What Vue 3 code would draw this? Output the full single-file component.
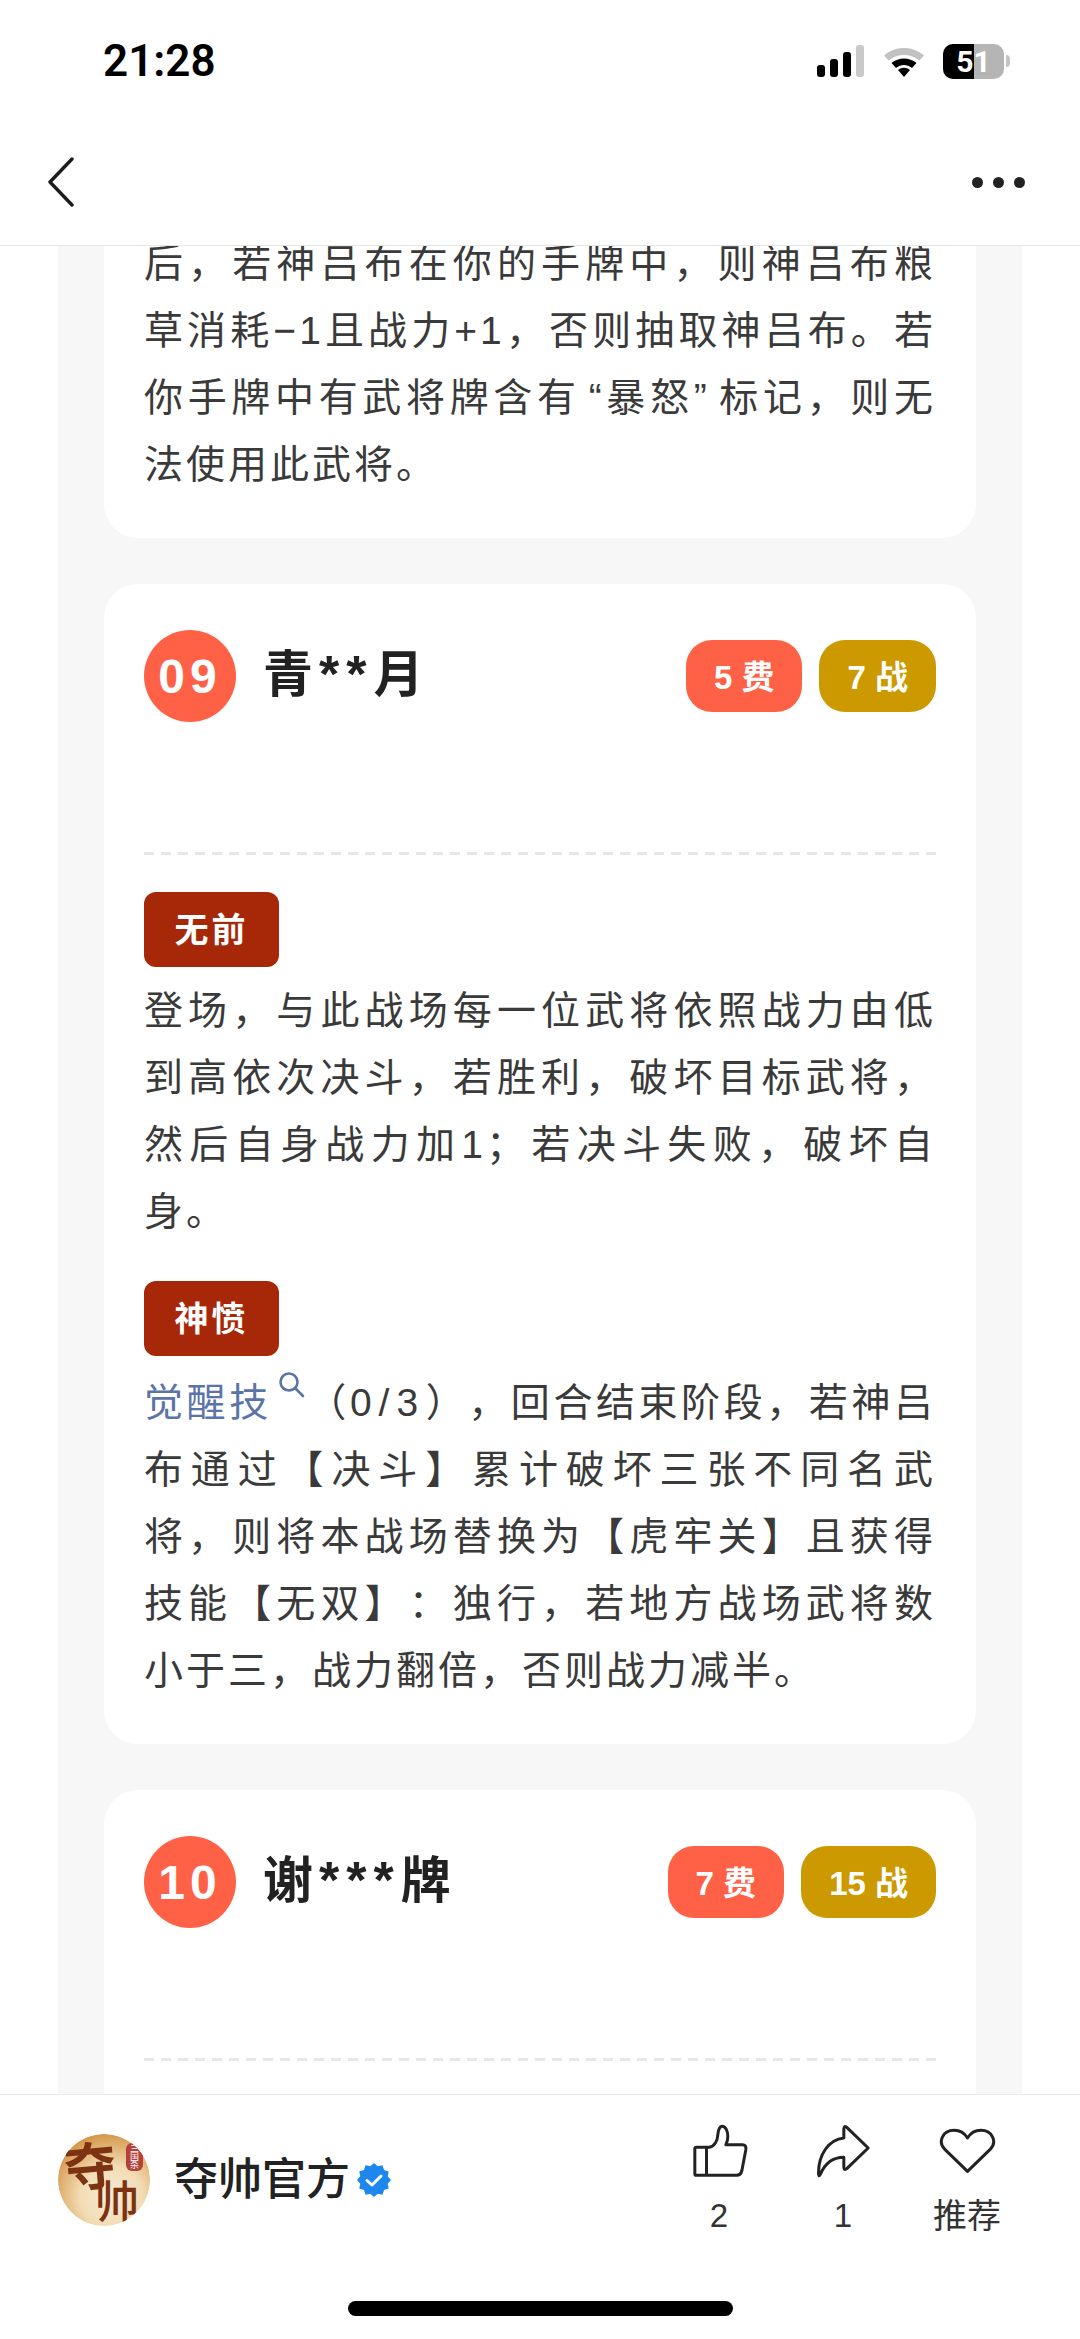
<script setup>
const points = (() => {
  const out = []
  for (let i = 0; i < 24; i++) {
    const r = i % 2 ? 14.2 : 17
    const a = (Math.PI * 2 * i) / 24 - Math.PI / 2
    out.push(`${(17 + r * Math.cos(a)).toFixed(2)},${(17 + r * Math.sin(a)).toFixed(2)}`)
  }
  return out.join(' ')
})()
</script>

<template>
  <div class="page">
    <header class="head">
      <div class="status">
        <span class="time">21:28</span>
        <div class="sys">
          <svg class="signal" width="50" height="32" viewBox="0 0 50 32">
            <rect x="0" y="20" width="8" height="12" rx="3" fill="#000" />
            <rect x="13" y="14" width="8" height="18" rx="3" fill="#000" />
            <rect x="26" y="7" width="8" height="25" rx="3" fill="#000" />
            <rect x="39" y="0" width="8" height="32" rx="3" fill="#c9c9c9" />
          </svg>
          <svg class="wifi" width="44" height="32" viewBox="0 0 44 32">
            <path d="M2 10.5C13 0.5 31 0.5 42 10.5L37.5 15.5C29 8 15 8 6.5 15.5Z" fill="#c2c2c2" />
            <path d="M9.5 18C16.5 12 27.5 12 34.5 18L30 23C25 19 19 19 14 23Z" fill="#000" />
            <path d="M16 25C19.5 22 24.5 22 28 25L22 32Z" fill="#000" />
          </svg>
          <div class="battery">
            <span class="level"></span>
            <span class="pct">51</span>
          </div>
          <span class="nub"></span>
        </div>
      </div>
      <nav class="nav">
        <svg width="28" height="50" viewBox="0 0 28 50">
          <path d="M25 2L3 25L25 48" fill="none" stroke="#1c1c1c" stroke-width="3.4" stroke-linecap="round" stroke-linejoin="round" />
        </svg>
        <div class="dots"><i></i><i></i><i></i></div>
      </nav>
    </header>

    <main class="content">
      <div class="column">
        <section class="card first">
          <p class="body">后，若神吕布在你的手牌中，则神吕布粮草消耗−1且战力+1，否则抽取神吕布。若你手牌中有武将牌含有<span class="ql">“</span>暴怒<span class="qr">”</span>标记，则无法使用此武将。</p>
        </section>

        <section class="card">
          <div class="row">
            <span class="no">09</span>
            <span class="name">青<em>**</em>月</span>
            <div class="badges">
              <span class="badge cost">5 费</span>
              <span class="badge power">7 战</span>
            </div>
          </div>
          <div class="dash"></div>
          <span class="tag">无前</span>
          <p class="body">登场，与此战场每一位武将依照战力由低到高依次决斗，若胜利，破坏目标武将，然后自身战力加1；若决斗失败，破坏自身。</p>
          <span class="tag second">神愤</span>
          <p class="body later"><span class="link">觉醒技<svg class="mag" width="27" height="27" viewBox="0 0 27 27"><circle cx="11" cy="11" r="8.5" fill="none" stroke="#5b74a8" stroke-width="2.6" /><path d="M17 17L25 25" stroke="#5b74a8" stroke-width="2.6" stroke-linecap="round" /></svg></span>（<span class="frac">0/3</span>），回合结束阶段，若神吕布通过【决斗】累计破坏三张不同名武将，则将本战场替换为【虎牢关】且获得技能【无双】：独行，若地方战场武将数小于三，战力翻倍，否则战力减半。</p>
        </section>

        <section class="card last">
          <div class="row">
            <span class="no">10</span>
            <span class="name">谢<em>***</em>牌</span>
            <div class="badges">
              <span class="badge cost">7 费</span>
              <span class="badge power">15 战</span>
            </div>
          </div>
          <div class="dash"></div>
        </section>
      </div>
    </main>

    <footer class="foot">
      <div class="bar">
        <div class="author">
          <div class="avatar">
            <svg width="92" height="92" viewBox="0 0 92 92">
              <defs>
                <radialGradient id="av" cx="58%" cy="68%" r="68%">
                  <stop offset="0" stop-color="#f8ecd8" />
                  <stop offset="0.5" stop-color="#f2dcb4" />
                  <stop offset="1" stop-color="#d6984c" />
                </radialGradient>
              </defs>
              <circle cx="46" cy="46" r="46" fill="url(#av)" />
              <text x="6" y="52" class="av1" transform="rotate(-5 30 30)">夺</text>
              <text x="37" y="84" class="av2">帅</text>
              <rect x="68" y="9" width="17" height="28" rx="6" fill="#b5423a" />
              <text x="72" y="18" class="av3">三</text>
              <text x="72" y="26" class="av3">国</text>
              <text x="72" y="34" class="av3">杀</text>
            </svg>
          </div>
          <span class="author-name">夺帅官方</span>
          <svg class="check" width="34" height="34" viewBox="0 0 34 34">
            <polygon :points="points" fill="#1e87ee" />
            <path d="M10 17.5L15 22L24 13" fill="none" stroke="#fff" stroke-width="3" stroke-linecap="round" stroke-linejoin="round" />
          </svg>
        </div>
        <div class="actions">
          <div class="action">
            <svg width="57" height="54" viewBox="96 38 170 162">
              <path class="ico" d="M107 113Q107 108 112 108L150 108C165 105 175 90 176 70C177 50 185 44 190 45C200 46 206 60 206 75C206 85 203 95 200 100L250 100Q262 100 260 115L248 178Q245 192 232 192L112 192Q107 192 107 187ZM142 108L142 192" />
            </svg>
            <span>2</span>
          </div>
          <div class="action">
            <svg width="57" height="54" viewBox="465 48 170 162">
              <path class="ico" d="M560 58L624 120L560 182Q552 188 551 178L551 148C520 148 495 165 480 200Q475 208 475 195C475 140 505 95 551 90L551 62Q552 52 560 58Z" />
            </svg>
            <span>1</span>
          </div>
          <div class="action">
            <svg width="57" height="54" viewBox="835 46 170 162">
              <path class="ico" d="M920 188L852 122C830 100 845 65 880 65C898 65 912 75 920 88C928 75 942 65 960 65C995 65 1010 100 988 122Z" />
            </svg>
            <span class="rec">推荐</span>
          </div>
        </div>
      </div>
      <div class="home"></div>
    </footer>
  </div>
</template>

<style>
html, body { margin: 0; background: #fff; }
</style>

<style scoped>
.page {
  width: 1080px;
  height: 2339px;
  display: flex;
  flex-direction: column;
  overflow: hidden;
  background: #fff;
  font-family: "Liberation Sans", "Noto Sans CJK SC", sans-serif;
  color: #333;
}
.head {
  height: 246px;
  flex: none;
  box-sizing: border-box;
  border-bottom: 1px solid #e6e6e6;
}
.status {
  height: 122px;
  display: flex;
  align-items: center;
  justify-content: space-between;
  padding: 0 70px 0 103px;
}
.time {
  font-family: Roboto, sans-serif;
  font-size: 44px;
  font-weight: 600;
  color: #000;
}
.sys {
  display: flex;
  align-items: center;
}
.signal { margin-right: 14px; }
.wifi { margin-right: 16px; width: 46px; }
.battery {
  position: relative;
  width: 61px;
  height: 35px;
  border-radius: 10px;
  background: #b5b5b5;
  overflow: hidden;
  display: flex;
  align-items: center;
  justify-content: center;
}
.level {
  position: absolute;
  left: 0;
  top: 0;
  bottom: 0;
  width: 31px;
  background: #000;
}
.pct {
  position: relative;
  font-family: Roboto, sans-serif;
  color: #fff;
  font-size: 30px;
  font-weight: 700;
}
.nub {
  width: 4px;
  height: 12px;
  margin-left: 2px;
  border-radius: 0 4px 4px 0;
  background: #c4c4c4;
}
.nav {
  height: 120px;
  display: flex;
  align-items: center;
  justify-content: space-between;
  padding: 0 55px 0 47px;
}
.dots {
  display: flex;
  gap: 10px;
}
.dots i {
  width: 11px;
  height: 11px;
  border-radius: 50%;
  background: #222;
}
.content {
  flex: 1;
  min-height: 0;
  overflow: hidden;
}
.column {
  margin: -16px 58px 0;
  padding: 0 46px;
  background: #f7f7f7;
  display: flex;
  flex-direction: column;
  gap: 46px;
}
.card {
  background: #fff;
  border-radius: 34px;
  padding: 46px 40px 40px;
  flex: none;
}
.card.first {
  padding-top: 0;
  border-radius: 0 0 34px 34px;
}
.card.last { padding-bottom: 240px; }
.row {
  height: 92px;
  display: flex;
  align-items: center;
}
.no {
  width: 92px;
  height: 92px;
  border-radius: 50%;
  background: #ff6146;
  color: #fff;
  font-size: 48px;
  font-weight: 700;
  letter-spacing: 5px;
  display: flex;
  align-items: center;
  justify-content: center;
}
.name {
  margin: 0 0 13px 27px;
  font-size: 50px;
  font-weight: 700;
  color: #222;
}
.name em {
  font-style: normal;
  font-size: 52px;
  letter-spacing: 7px;
  margin-left: 6px;
}
.badges {
  margin-left: auto;
  display: flex;
  gap: 17px;
}
.badge {
  height: 72px;
  min-width: 115px;
  box-sizing: border-box;
  padding: 0 28px 3px;
  border-radius: 26px;
  color: #fff;
  font-size: 33px;
  font-weight: 700;
  display: flex;
  align-items: center;
  justify-content: center;
}
.cost { background: #ff6146; }
.power { background: #cc9900; }
.dash {
  height: 3px;
  margin-top: 130px;
  background: repeating-linear-gradient(90deg, #e8e6e6 0 10px, transparent 10px 17px);
}
.tag {
  display: flex;
  align-items: center;
  justify-content: center;
  box-sizing: border-box;
  width: 135px;
  height: 75px;
  padding-bottom: 4px;
  margin-top: 37px;
  border-radius: 12px;
  background: #a62808;
  color: #fff;
  font-size: 34px;
  font-weight: 700;
  letter-spacing: 3px;
}
.tag.second { margin-top: 36px; }
.body {
  margin: 10px 0 0;
  font-size: 39px;
  line-height: 67px;
  letter-spacing: 3px;
  text-align: justify;
  text-spacing-trim: space-all;
  color: #3a3a3a;
}
.body.later { margin-top: 13px; }
.first .body { margin: 0; }
.ql { margin-left: 8px; }
.qr { margin-right: 8px; }
.frac { letter-spacing: 7px; }
.link {
  color: #5b74a8;
  letter-spacing: 3px;
}
.mag {
  margin: 0 2px 0 6px;
  vertical-align: 18px;
}
.foot {
  height: 245px;
  flex: none;
  box-sizing: border-box;
  border-top: 1px solid #e8e8e8;
  background: #fff;
  padding-top: 29px;
}
.bar {
  height: 117px;
  display: flex;
  justify-content: space-between;
  padding: 0 51px 0 58px;
}
.author {
  display: flex;
  align-items: center;
  height: 92px;
  margin-top: 10px;
}
.avatar {
  width: 92px;
  height: 92px;
  border-radius: 50%;
  overflow: hidden;
}
.av1 {
  font-family: "Noto Sans CJK SC", sans-serif;
  font-size: 52px;
  font-weight: 700;
  fill: #7c3312;
}
.av2 {
  font-family: "Noto Sans CJK SC", sans-serif;
  font-size: 44px;
  font-weight: 500;
  fill: #7c3312;
}
.av3 {
  font-family: "Noto Sans CJK SC", sans-serif;
  font-size: 9px;
  fill: #fff;
}
.author-name {
  margin: 0 0 8px 24px;
  font-size: 44px;
  color: #222;
  font-weight: 500;
}
.check { margin-left: 7px; }
.actions {
  display: flex;
}
.action {
  width: 124px;
  display: flex;
  flex-direction: column;
  align-items: center;
  font-size: 33px;
  color: #333;
}
.action svg { display: block; }
.action span {
  margin-top: 14px;
  line-height: 48px;
}
.action .rec { font-size: 34px; }
.ico {
  fill: none;
  stroke: #222;
  stroke-width: 9;
  stroke-linejoin: round;
  stroke-linecap: round;
}
.home {
  width: 385px;
  height: 15px;
  margin: 60px auto 0;
  border-radius: 8px;
  background: #000;
}
</style>
